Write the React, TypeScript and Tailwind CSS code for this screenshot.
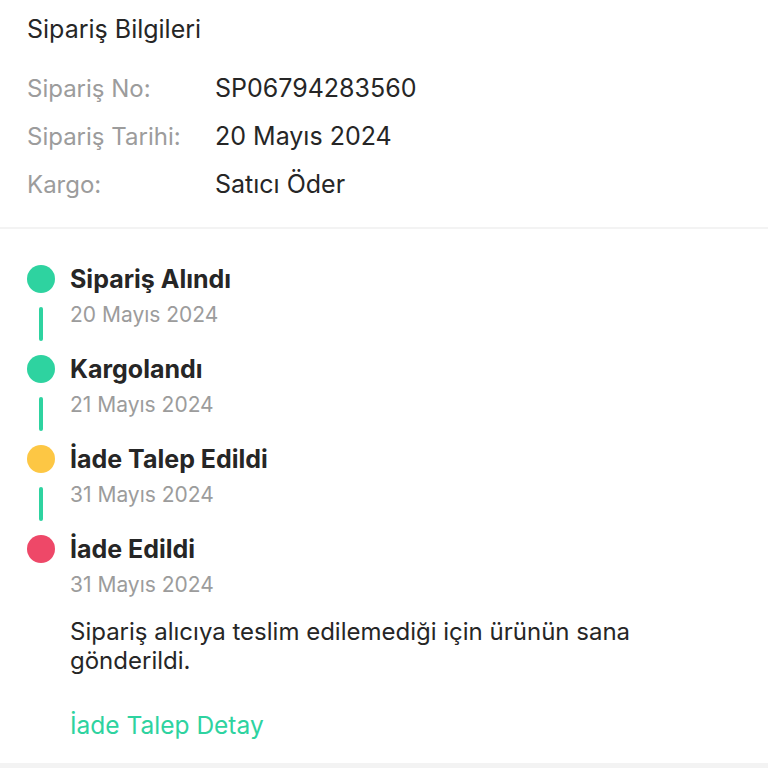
import React from 'react';

const info = [
  { label: 'Sipariş No:', value: 'SP06794283560' },
  { label: 'Sipariş Tarihi:', value: '20 Mayıs 2024' },
  { label: 'Kargo:', value: 'Satıcı Öder' },
];

const steps = [
  { title: 'Sipariş Alındı', date: '20 Mayıs 2024', dot: 'bg-[#2ed3a0]' },
  { title: 'Kargolandı', date: '21 Mayıs 2024', dot: 'bg-[#2ed3a0]' },
  { title: 'İade Talep Edildi', date: '31 Mayıs 2024', dot: 'bg-[#fdc744]' },
  { title: 'İade Edildi', date: '31 Mayıs 2024', dot: 'bg-[#ee4868]' },
];

export default function App() {
  return (
    <div className="w-[768px] h-[768px] overflow-hidden bg-white font-['Inter','Liberation_Sans',sans-serif] text-[#262626]">
      {/* Order info */}
      <div className="px-[27px] pt-[15px] pb-[18px]">
        <h2 className="text-[25px] leading-[28px] font-normal">Sipariş Bilgileri</h2>
        <div className="mt-[22px]">
          {info.map((row) => (
            <div key={row.label} className="flex h-12 items-center">
              <span className="w-[188px] text-[24px] text-[#9c9c9c]">{row.label}</span>
              <span className="text-[25px]">{row.value}</span>
            </div>
          ))}
        </div>
      </div>

      <div className="h-[2px] bg-[#f3f3f3]" />

      {/* Status timeline */}
      <div className="px-[27px] pt-[36px] pb-[24px]">
        {steps.map((step, idx) => {
          const isLast = idx === steps.length - 1;
          return (
            <div key={step.title} className="flex">
              <div className="flex w-7 flex-col items-center">
                <div className={`h-7 w-7 rounded-full ${step.dot}`} />
                {!isLast && <div className="my-[14px] h-[34px] w-1 rounded-full bg-[#2ed3a0]" />}
              </div>
              <div className="ml-[15px]">
                <div className="text-[25px] leading-[28px] font-bold">{step.title}</div>
                <div className="mt-[10px] text-[21px] leading-[24px] text-[#9c9c9c]">{step.date}</div>
              </div>
            </div>
          );
        })}
        <div className="ml-[43px]">
          <p className="mt-[20px] w-[620px] text-[24px] leading-[29px]">
            Sipariş alıcıya teslim edilemediği için ürünün sana gönderildi.
          </p>
          <div className="mt-[36px] text-[24.5px] leading-[28px] text-[#2ed3a0]">İade Talep Detay</div>
        </div>
      </div>

      <div className="h-[6px] bg-[#f3f3f3]" />
    </div>
  );
}
